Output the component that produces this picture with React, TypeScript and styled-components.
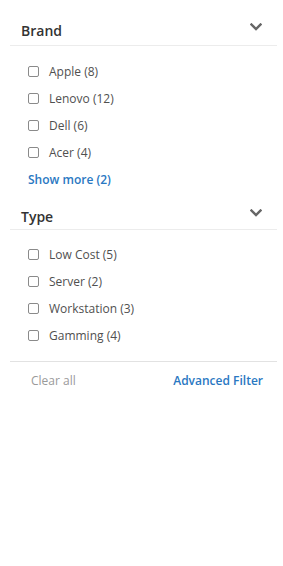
import React from "react";
import styled, { createGlobalStyle } from "styled-components";

const GlobalStyle = createGlobalStyle`
  html, body { margin: 0; padding: 0; background: #ffffff; }
  body { font-family: "Open Sans", "Liberation Sans", sans-serif; }
  * { box-sizing: border-box; }
`;

const Panel = styled.div`
  width: 267px;
  margin-left: 10px;
  display: flex;
  flex-direction: column;
`;

const Section = styled.section`
  display: flex;
  flex-direction: column;
`;

const Header = styled.div<{ $top: number; $bottom: number }>`
  display: flex;
  align-items: center;
  justify-content: space-between;
  padding: ${(p) => p.$top}px 15px ${(p) => p.$bottom}px 11px;
  border-bottom: 1px solid #ececec;
`;

const Title = styled.h3`
  margin: 0;
  font-size: 14px;
  line-height: 20px;
  font-weight: 600;
  color: #333333;
`;

const Chevron = styled.svg`
  display: block;
  width: 12px;
  height: 8px;
  margin-top: -9px;
`;

const List = styled.ul<{ $top: number }>`
  list-style: none;
  margin: 0;
  padding: ${(p) => p.$top}px 0 0 18px;
  display: flex;
  flex-direction: column;
`;

const Row = styled.li`
  display: flex;
  align-items: center;
  height: 27px;
  gap: 10px;
`;

const Box = styled.span`
  width: 11px;
  height: 11px;
  border: 1px solid #8a8a8a;
  border-radius: 2px;
  background: #fff;
  flex: none;
`;

const Label = styled.span`
  font-size: 12px;
  line-height: 16px;
  color: #505050;
`;

const Link = styled.a`
  font-size: 12px;
  line-height: 16px;
  font-weight: 600;
  color: #2a78c2;
  text-decoration: none;
  cursor: pointer;
`;

const ShowMore = styled.div`
  display: flex;
  align-items: center;
  height: 28px;
  padding-left: 18px;
`;

const Footer = styled.div`
  margin-top: 12px;
  border-top: 1px solid #e2e2e2;
  display: flex;
  justify-content: space-between;
  align-items: center;
  padding: 11px 14px 0 21px;
`;

const Clear = styled.span`
  font-size: 12px;
  line-height: 16px;
  color: #9a9a9a;
`;

const ChevronIcon = () => (
  <Chevron viewBox="0 0 12 8">
    <path d="M1.5 1.5 L6 6 L10.5 1.5" fill="none" stroke="#666666" strokeWidth="2.4" strokeLinecap="square" />
  </Chevron>
);

const brands = ["Apple (8)", "Lenovo (12)", "Dell (6)", "Acer (4)"];
const types = ["Low Cost (5)", "Server (2)", "Workstation (3)", "Gamming (4)"];

export default function App() {
  return (
    <>
      <GlobalStyle />
      <Panel>
        <Section>
          <Header $top={21} $bottom={4}>
            <Title>Brand</Title>
            <ChevronIcon />
          </Header>
          <List $top={12}>
            {brands.map((b) => (
              <Row key={b}>
                <Box />
                <Label>{b}</Label>
              </Row>
            ))}
          </List>
          <ShowMore>
            <Link>Show more (2)</Link>
          </ShowMore>
        </Section>
        <Section>
          <Header $top={13} $bottom={2}>
            <Title>Type</Title>
            <ChevronIcon />
          </Header>
          <List $top={11}>
            {types.map((t) => (
              <Row key={t}>
                <Box />
                <Label>{t}</Label>
              </Row>
            ))}
          </List>
        </Section>
        <Footer>
          <Clear>Clear all</Clear>
          <Link>Advanced Filter</Link>
        </Footer>
      </Panel>
    </>
  );
}
